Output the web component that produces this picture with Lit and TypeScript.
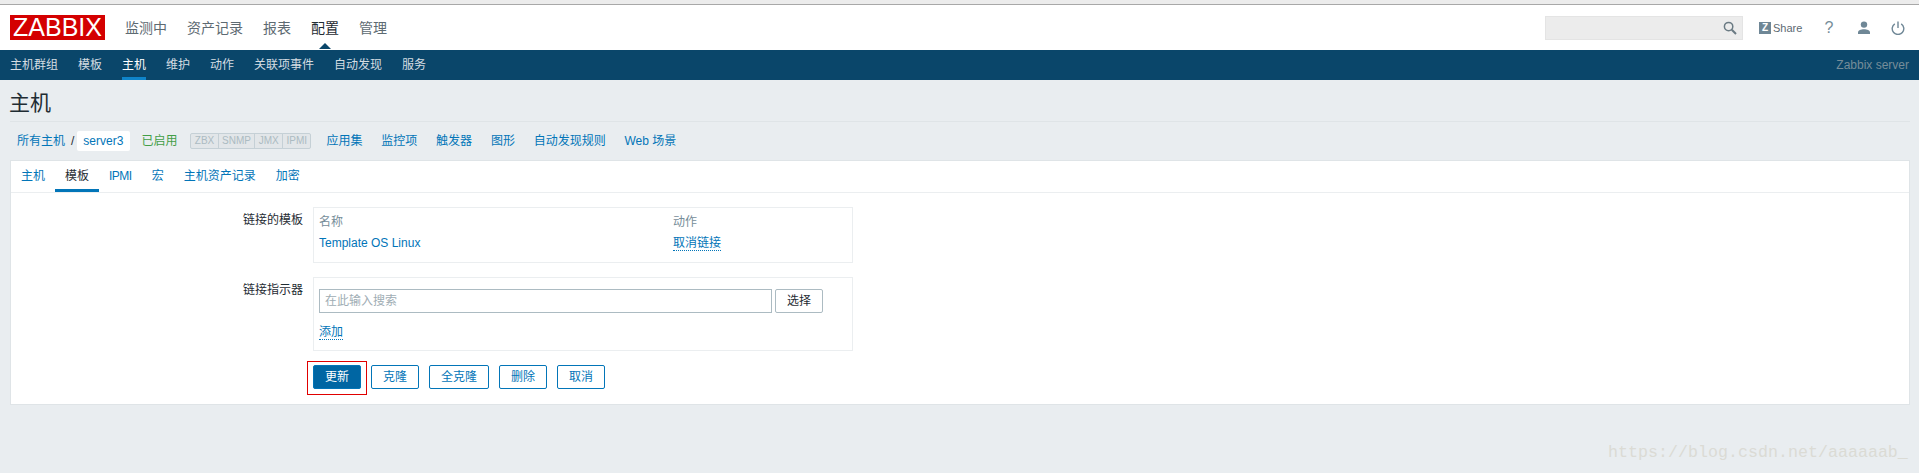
import { LitElement, html, css } from 'lit';
import { customElement } from 'lit/decorators.js';

const MAIN = ['监测中', '资产记录', '报表', '配置', '管理'];
const SUB = ['主机群组', '模板', '主机', '维护', '动作', '关联项事件', '自动发现', '服务'];
const LINKS = ['应用集', '监控项', '触发器', '图形', '自动发现规则', 'Web 场景'];
const TABS = ['主机', '模板', 'IPMI', '宏', '主机资产记录', '加密'];
const TAGS = ['ZBX', 'SNMP', 'JMX', 'IPMI'];

@customElement('app-root')
export class AppRoot extends LitElement {
  static styles = css`
    :host {
      display: block;
      position: relative;
      height: 473px;
      overflow: hidden;
      background: #e9edf0;
      color: #1f2c33;
      font: 12px/14px 'Liberation Sans', 'Noto Sans CJK SC', sans-serif;
    }
    a { color: #0275b8; text-decoration: none; }
    .strip { height: 4px; background: #ececec; border-bottom: 1px solid #a8a8a8; }
    .top {
      display: flex;
      align-items: center;
      height: 45px;
      padding: 0 14px 0 10px;
      background: #fff;
    }
    .logo {
      width: 95px;
      height: 25px;
      margin-right: 10px;
      background: #d40000;
      color: #fff;
      font-size: 25px;
      line-height: 25px;
      text-align: center;
    }
    .main { display: flex; flex: 1; }
    .main span { padding: 0 10px; font-size: 14px; line-height: 20px; color: #5d6a72; }
    .main span.on { color: #1f2c33; position: relative; }
    .main span.on::after {
      content: '';
      position: absolute;
      left: 50%;
      top: 25px;
      margin-left: -6px;
      border: 6px solid transparent;
      border-top: 0;
      border-bottom-color: #0a466a;
    }
    .search {
      box-sizing: border-box;
      display: flex;
      align-items: center;
      justify-content: flex-end;
      width: 198px;
      height: 24px;
      margin-right: 16px;
      padding-right: 5px;
      background: #ececec;
      border: 1px solid #e4e4e4;
    }
    .tools { display: flex; align-items: center; color: #768d99; }
    .share { display: flex; align-items: center; width: 52px; font-size: 11px; color: #5d6a72; }
    .z {
      width: 12px;
      height: 12px;
      margin-right: 2px;
      background: #6f8796;
      color: #fff;
      font-size: 10px;
      font-weight: bold;
      line-height: 12px;
      text-align: center;
    }
    .help { width: 36px; font-size: 16px; text-align: center; }
    .user { display: block; margin-left: 10px; }
    .power { display: block; margin-left: 20px; }
    .sub {
      display: flex;
      justify-content: space-between;
      height: 30px;
      padding: 0 10px;
      background: #0a466a;
      color: #d5dde2;
    }
    .sub ul { display: flex; gap: 20px; margin: 0; padding: 0; list-style: none; }
    .sub li { box-sizing: border-box; height: 30px; line-height: 30px; }
    .sub li.on { color: #fff; border-bottom: 3px solid #0f84c9; }
    .sub .srv { line-height: 30px; color: #768d99; }
    h1 {
      height: 41px;
      margin: 0 9px 0 10px;
      font-size: 21px;
      font-weight: normal;
      line-height: 46px;
      text-indent: -1px;
      border-bottom: 1px solid #dfe4e7;
    }
    .crumbs { display: flex; align-items: center; height: 38px; padding-left: 17px; }
    .slash { margin: 0 3px 0 6px; color: #1f2c33; }
    .cur {
      padding: 3px 7px 3px 6px;
      background: #fff;
      border-radius: 2px;
      color: #0275b8;
    }
    .status { margin: 0 14px 0 11px; color: #429e47; }
    .tags { display: flex; margin-right: 15px; }
    .tags span {
      box-sizing: border-box;
      height: 16px;
      padding: 0 3.4px;
      border: 1px solid #c5d0d6;
      margin-left: -1px;
      background: #e2e6e9;
      color: #acbbc2;
      font-size: 10px;
      line-height: 14px;
    }
    .tags span:first-child { border-radius: 2px 0 0 2px; }
    .tags span:last-child { border-radius: 0 2px 2px 0; }
    .links { display: flex; gap: 18.8px; }
    .panel {
      box-sizing: border-box;
      height: 245px;
      margin: 0 9px 0 10px;
      background: #fff;
      border: 1px solid #dfe4e7;
    }
    .tabs { display: flex; height: 31px; border-bottom: 1px solid #ebeef0; }
    .tabs a { box-sizing: border-box; height: 31px; padding: 0 10px; line-height: 30px; }
    .tabs a.on { color: #1f2c33; border-bottom: 3px solid #0275b8; }
    .tabs a.tight { letter-spacing: -0.5px; }
    .form {
      display: grid;
      grid-template-columns: 292px 540px;
      column-gap: 10px;
      align-content: start;
      padding-top: 14px;
    }
    .label { padding-top: 6px; text-align: right; }
    .box { box-sizing: border-box; border: 1px solid #ebeef0; padding: 0 5px; }
    .linked { height: 56px; margin-bottom: 14px; }
    .cols { display: grid; grid-template-columns: 354px auto; }
    .cols .h { box-sizing: border-box; height: 28px; padding-top: 7px; color: #768d99; }
    .dot { border-bottom: 1px dotted #0275b8; }
    .indicators { height: 74px; padding-top: 11px; }
    .pick { display: flex; gap: 3px; }
    .input {
      box-sizing: border-box;
      width: 453px;
      height: 24px;
      padding: 4px 5px;
      border: 1px solid #acbbc2;
      color: #a0adb4;
    }
    .pickbtn {
      box-sizing: border-box;
      width: 48px;
      height: 24px;
      border: 1px solid #acbbc2;
      border-radius: 2px;
      color: #1f2c33;
      line-height: 22px;
      text-align: center;
    }
    .add { margin-top: 12px; }
    .buttons { grid-column: 2; display: flex; gap: 10px; margin-top: 14px; }
    .btn {
      box-sizing: border-box;
      height: 24px;
      border: 1px solid #0275b8;
      border-radius: 2px;
      color: #0275b8;
      line-height: 22px;
      text-align: center;
    }
    .w48 { width: 48px; }
    .w60 { width: 60px; }
    .primary { position: relative; background: #0066a3; color: #fff; }
    /* red annotation frame from the original screenshot */
    .primary::after {
      content: '';
      position: absolute;
      left: -7px;
      right: -7px;
      top: -5px;
      bottom: -7px;
      border: 1px solid #e00000;
    }
    .mark {
      position: absolute;
      left: 1608px;
      top: 443px;
      color: #dbdbd5;
      font: 16.67px/20px 'Liberation Mono', monospace;
      white-space: nowrap;
    }
  `;

  render() {
    return html`
      <div class="strip"></div>
      <div class="top">
        <div class="logo">ZABBIX</div>
        <div class="main">
          ${MAIN.map((m) => html`<span class=${m === '配置' ? 'on' : ''}>${m}</span>`)}
        </div>
        <div class="search">
          <svg width="14" height="14" viewBox="0 0 14 14" fill="none" stroke="#6a7a83" stroke-width="1.5">
            <circle cx="5.6" cy="5.6" r="4.2"></circle>
            <path d="M8.8 8.8L13 13" stroke-width="2"></path>
          </svg>
        </div>
        <div class="tools">
          <div class="share"><span class="z">Z</span>Share</div>
          <div class="help">?</div>
          <svg class="user" width="14" height="14" viewBox="0 0 14 14" fill="#6f8796">
            <circle cx="7" cy="3.6" r="3.2"></circle>
            <path d="M1 13v-1.6C1 9.4 4 8.2 7 8.2s6 1.200 6 3.200V13z"></path>
          </svg>
          <svg class="power" width="14" height="14" viewBox="0 0 14 14" fill="none" stroke="#6f8796" stroke-width="1.4">
            <path d="M3.800 2.800a5.800 5.800 0 1 0 6.400 0"></path>
            <path d="M7 0.500V7"></path>
          </svg>
        </div>
      </div>
      <div class="sub">
        <ul>${SUB.map((s) => html`<li class=${s === '主机' ? 'on' : ''}>${s}</li>`)}</ul>
        <span class="srv">Zabbix server</span>
      </div>
      <h1>主机</h1>
      <div class="crumbs">
        <a>所有主机</a><span class="slash">/</span><a class="cur">server3</a>
        <span class="status">已启用</span>
        <div class="tags">${TAGS.map((t) => html`<span>${t}</span>`)}</div>
        <div class="links">${LINKS.map((l) => html`<a>${l}</a>`)}</div>
      </div>
      <div class="panel">
        <div class="tabs">
          ${TABS.map(
            (t) => html`<a class="${t === '模板' ? 'on' : ''} ${t === 'IPMI' ? 'tight' : ''}">${t}</a>`
          )}
        </div>
        <div class="form">
          <div class="label">链接的模板</div>
          <div class="box linked">
            <div class="cols">
              <div class="h">名称</div>
              <div class="h">动作</div>
              <a>Template OS Linux</a>
              <div><a class="dot">取消链接</a></div>
            </div>
          </div>
          <div class="label">链接指示器</div>
          <div class="box indicators">
            <div class="pick">
              <div class="input">在此输入搜索</div>
              <div class="pickbtn">选择</div>
            </div>
            <div class="add"><a class="dot">添加</a></div>
          </div>
          <div class="buttons">
            <a class="btn w48 primary">更新</a>
            <a class="btn w48">克隆</a>
            <a class="btn w60">全克隆</a>
            <a class="btn w48">删除</a>
            <a class="btn w48">取消</a>
          </div>
        </div>
      </div>
      <div class="mark">https://blog.csdn.net/aaaaaab_</div>
    `;
  }
}
